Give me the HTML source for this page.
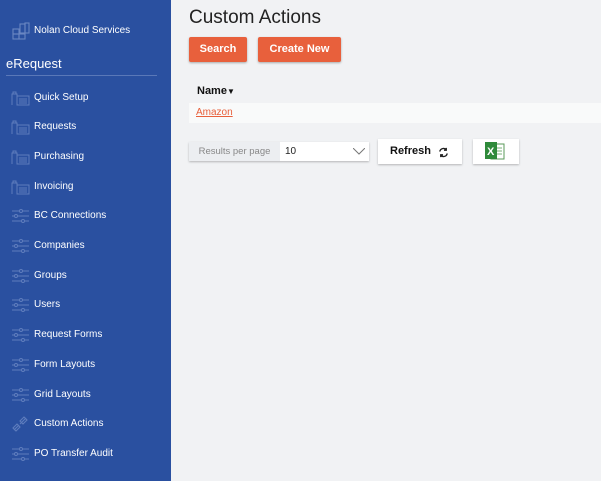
<!DOCTYPE html>
<html><head><style>
body{margin:0;width:601px;height:481px;overflow:hidden;background:#f1f2f4;font-family:"Liberation Sans",sans-serif;position:relative}
#sb{position:absolute;left:0;top:0;width:171px;height:481px;background:#2a50a0;color:#fff}
.it{position:absolute;left:34px;font-size:10px;line-height:12px;color:#fff}
.ic{position:absolute;left:11px;width:20px;height:16px}
.btn{position:absolute;background:#e8603c;color:#fff;font-weight:bold;font-size:11px;text-align:center;border-radius:2px;box-shadow:0 1px 2px rgba(0,0,0,.3)}
.wb{position:absolute;background:#fff;box-shadow:0 1px 2px rgba(0,0,0,.25)}
</style></head><body>
<div id="sb">
<svg style="position:absolute;left:12px;top:22px" width="18" height="18" viewBox="0 0 18 18" fill="none" stroke="#6a86c2" stroke-width="1.1"><rect x="1" y="7" width="6" height="5"/><rect x="1" y="12" width="6" height="5"/><rect x="7" y="12" width="6" height="5"/><rect x="8" y="2" width="5" height="9"/><rect x="13" y="1" width="4" height="10"/></svg>
<div class="it" style="top:25px">Nolan Cloud Services</div>
<div style="position:absolute;left:6px;top:56px;font-size:13px;color:#fff">eRequest</div>
<div style="position:absolute;left:6px;top:75px;width:151px;height:1px;background:#5a78b8"></div>
<div id="items"></div>
</div>
<script>
var n=["Quick Setup","Requests","Purchasing","Invoicing","BC Connections","Companies","Groups","Users","Request Forms","Form Layouts","Grid Layouts","Custom Actions","PO Transfer Audit"];
var h="";
for(var i=0;i<n.length;i++){var y=Math.round(91.5+i*29.7);var ic;
if(i<4)ic='<svg class="ic" style="top:'+(y-2)+'px" viewBox="0 0 20 16" fill="none" stroke="#5f7dbd" stroke-width="1"><path d="M1 15V4h5v11M2 4V2h3v2M6 15V6h12v9zM8 9h8M8 11h8M8 13h8"/></svg>';
else if(i==11)ic='<svg class="ic" style="top:'+(y-2)+'px" viewBox="0 0 20 16" fill="none" stroke="#5f7dbd" stroke-width="1.1"><path d="M3 14l5-5M9 8l6-6M5 15l-3-3 4-4 3 3zM12 8l-3-3 4-4 3 3z"/></svg>';
else ic='<svg class="ic" style="top:'+(y-2)+'px" viewBox="0 0 20 16" fill="none" stroke="#5f7dbd" stroke-width="1"><path d="M1 3h17M1 8h17M1 13h17"/><circle cx="10" cy="3" r="1.5" fill="#2a50a0"/><circle cx="5" cy="8" r="1.5" fill="#2a50a0"/><circle cx="12" cy="13" r="1.5" fill="#2a50a0"/></svg>';
h+=ic+'<div class="it" style="top:'+y+'px">'+n[i]+'</div>';}
document.getElementById("items").innerHTML=h;
</script>
<div style="position:absolute;left:189px;top:7px;font-size:19px;color:#222">Custom Actions</div>
<div class="btn" style="left:189px;top:37px;width:58px;height:25px;line-height:25px">Search</div>
<div class="btn" style="left:258px;top:37px;width:83px;height:25px;line-height:25px">Create New</div>
<div style="position:absolute;left:197px;top:85px;font-size:11px;font-weight:bold;color:#111">Name<span style="font-size:8px">&#9660;</span></div>
<div style="position:absolute;left:189px;top:103px;width:412px;height:20px;background:#f9fafa"></div>
<div style="position:absolute;left:196px;top:107px;font-size:10px;color:#e8603c;text-decoration:underline">Amazon</div>
<div class="wb" style="left:189px;top:142px;width:180px;height:19px;background:#fff">
<div style="position:absolute;left:0;top:0;width:91px;height:19px;background:#eceef1;color:#888;font-size:9.5px;line-height:19px;text-align:center">Results per page</div>
<div style="position:absolute;left:96px;top:0;font-size:10px;line-height:19px;color:#222">10</div>
<svg style="position:absolute;left:164px;top:6px" width="12" height="7" viewBox="0 0 12 7" fill="none" stroke="#777"><path d="M0 0l6 6 6-6"/></svg>
</div>
<div class="wb" style="left:378px;top:139px;width:84px;height:25px"><span style="position:absolute;left:12px;top:6px;font-size:11px;font-weight:bold;color:#111">Refresh</span>
<svg style="position:absolute;left:60px;top:8px" width="11" height="11" viewBox="0 0 12 12" fill="none" stroke="#222" stroke-width="1.5"><path d="M2 5a4 4 0 0 1 7-2M10 7a4 4 0 0 1-7 2"/><path d="M9 1v2.5h-2.5M3 11v-2.5h2.5"/></svg></div>
<div class="wb" style="left:473px;top:139px;width:46px;height:25px">
<svg style="position:absolute;left:11px;top:2px" width="22" height="21" viewBox="0 0 22 21"><rect x="7" y="3" width="13" height="15" fill="#fff" stroke="#5a9a5a"/><path d="M10 7h8M10 10h8M10 13h8" stroke="#7ab27a"/><rect x="1" y="1" width="12" height="17" fill="#2f8a3a"/><text x="3" y="14" font-size="11" font-weight="bold" fill="#fff" font-family="Liberation Sans">X</text></svg></div>
</body></html>
